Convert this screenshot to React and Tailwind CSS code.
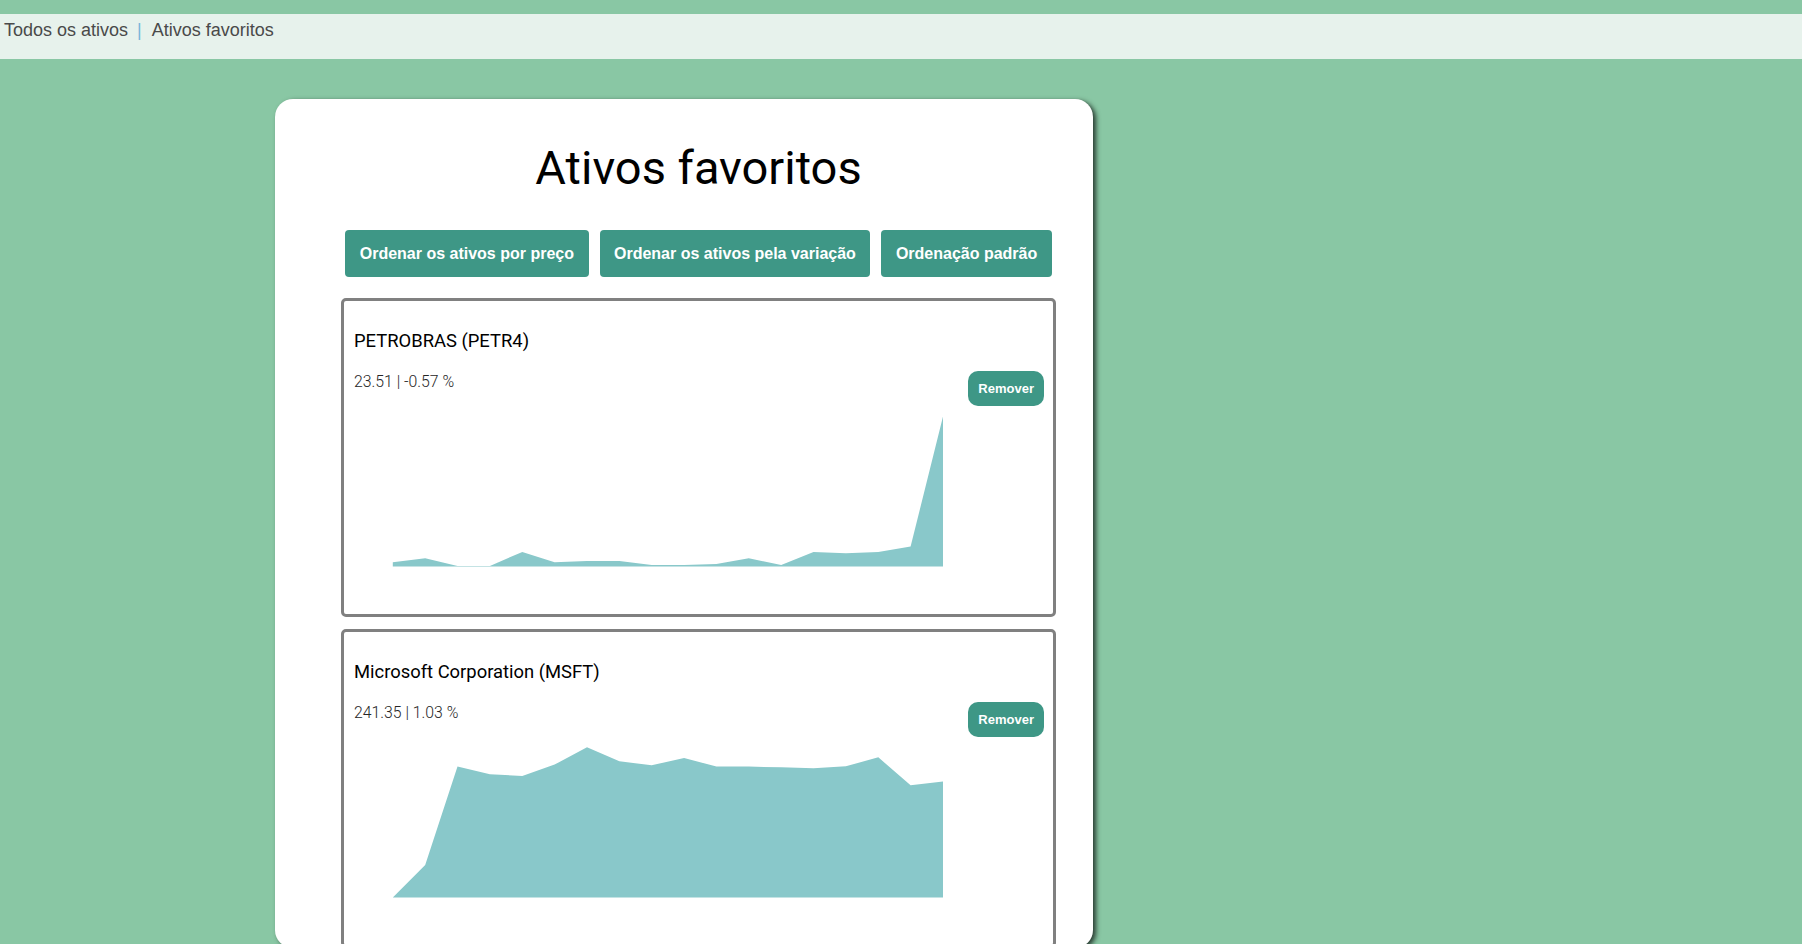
import React from 'react';

// svg y values (0 = top of chart box, 160.6 = baseline)
const stocks = [
  {
    name: 'PETROBRAS (PETR4)',
    stats: '23.51 | -0.57 %',
    ys: [155.3, 151.3, 158.9, 158.9, 144.9, 155.3, 153.9, 153.9, 157.9, 157.9, 156.9, 151.3, 157.9, 144.9, 146.3, 144.9, 139.6, 9.6],
  },
  {
    name: 'Microsoft Corporation (MSFT)',
    stats: '241.35 | 1.03 %',
    ys: [159.6, 126.9, 28.6, 36.3, 37.9, 26.6, 9.3, 23.3, 27.3, 19.9, 28.6, 28.6, 29.3, 30.3, 28.3, 19.3, 47.3, 43.6],
  },
];

function areaPath(ys) {
  const x0 = 48.8;
  const step = (599 - 48.8) / (ys.length - 1);
  const base = 160.6;
  const pts = ys.map((y, i) => `${(x0 + i * step).toFixed(1)},${(y + 1).toFixed(1)}`);
  return `M${x0},${base} L${pts.join(' L')} L${(x0 + (ys.length - 1) * step).toFixed(1)},${base} Z`;
}

function StockCard({ stock }) {
  return (
    <div className="rounded-[5px] border-[3px] border-[#808080] bg-white">
      <div className="pl-[10px] pr-[9px] pt-[29px]">
        <h3 className="mb-[19px] font-['Roboto',sans-serif] text-[18.4px] leading-[22px] text-black">
          {stock.name}
        </h3>
        <div className="flex items-start justify-between">
          <span className="mt-[1px] font-['Roboto',sans-serif] text-[15.8px] font-light leading-[19px] text-[#262626]">
            {stock.stats}
          </span>
          <button className="h-[35px] rounded-[10px] bg-[#3e9786] px-[10px] text-[13px] font-bold text-white">
            Remover
          </button>
        </div>
      </div>
      <svg width="709" height="208" className="block">
        <path d={areaPath(stock.ys)} fill="#89c8ca" />
      </svg>
    </div>
  );
}

export default function App() {
  return (
    <div className="min-h-screen bg-[#89c7a4] pt-[14px] font-['Liberation_Sans',Arial,sans-serif]">
      <nav className="h-[45px] bg-[#e7f2ec] pl-[4px] pt-[6px] text-[18px] leading-[21px] text-[#4a4a4a]">
        <a href="#">Todos os ativos</a>
        <span className="ml-[9px] mr-[10px] text-[#7ab6d9]">|</span>
        <a href="#">Ativos favoritos</a>
      </nav>

      <main className="pl-[275px] pt-[40px]">
        <div className="w-[818px] rounded-[18px] bg-white pl-[66px] pr-[37px] pt-[46px] shadow-[3px_2px_5px_rgba(0,0,0,0.7)]">
          <h1 className="text-center font-['Roboto',sans-serif] text-[47px] leading-[46px] text-black">
            Ativos favoritos
          </h1>

          <div className="mt-[39px] flex justify-center gap-[11px]">
            {['Ordenar os ativos por preço', 'Ordenar os ativos pela variação', 'Ordenação padrão'].map(label => (
              <button
                key={label}
                className="h-[47px] rounded-[4px] bg-[#3e9786] px-[14.5px] text-[16px] font-bold text-white"
              >
                {label}
              </button>
            ))}
          </div>

          <div className="mt-[21px] flex flex-col gap-[12px]">
            {stocks.map(s => (
              <StockCard key={s.name} stock={s} />
            ))}
          </div>
        </div>
      </main>
    </div>
  );
}
